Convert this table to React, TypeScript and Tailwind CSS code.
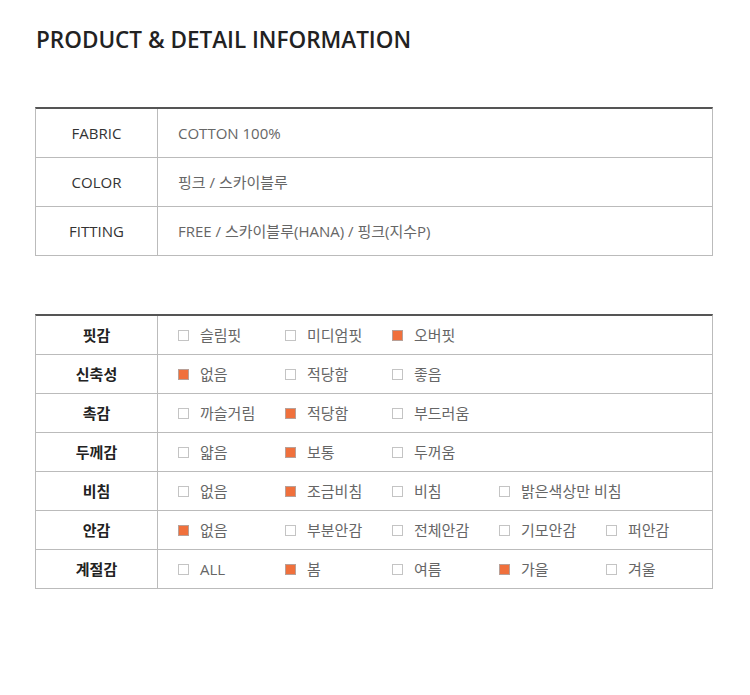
import React from "react";

const font = { fontFamily: '"Open Sans", "Noto Sans CJK KR", sans-serif' };

type Opt = [string, boolean];

const rows1: [string, string][] = [
  ["FABRIC", "COTTON 100%"],
  ["COLOR", "핑크 / 스카이블루"],
  ["FITTING", "FREE / 스카이블루(HANA) / 핑크(지수P)"],
];

const rows2: [string, Opt[]][] = [
  ["핏감", [["슬림핏", false], ["미디엄핏", false], ["오버핏", true]]],
  ["신축성", [["없음", true], ["적당함", false], ["좋음", false]]],
  ["촉감", [["까슬거림", false], ["적당함", true], ["부드러움", false]]],
  ["두께감", [["얇음", false], ["보통", true], ["두꺼움", false]]],
  ["비침", [["없음", false], ["조금비침", true], ["비침", false], ["밝은색상만 비침", false]]],
  ["안감", [["없음", true], ["부분안감", false], ["전체안감", false], ["기모안감", false], ["퍼안감", false]]],
  ["계절감", [["ALL", false], ["봄", true], ["여름", false], ["가을", true], ["겨울", false]]],
];

function Box({ on }: { on: boolean }) {
  return on ? (
    <span className="block w-[11px] h-[11px] bg-[#f0703c] border border-[#b9a097] shrink-0" />
  ) : (
    <span className="block w-[11px] h-[11px] bg-white border border-[#c4c4c4] shrink-0" />
  );
}

export default function App() {
  return (
    <div className="w-[750px] h-[695px] bg-white overflow-hidden" style={font}>
      <div className="pt-[24px] pl-[36px]">
        <h1 className="text-[22.5px] leading-[32px] font-semibold text-[#222]">
          PRODUCT &amp; DETAIL INFORMATION
        </h1>
      </div>

      <div className="ml-[35px] mt-[51px] w-[678px] border-t-2 border-t-[#555] border-x border-b border-[#bbb]">
        {rows1.map(([k, v], i) => (
          <div
            key={k}
            className={`flex ${i < rows1.length - 1 ? "border-b border-[#bbb]" : ""}`}
            style={{ height: i < rows1.length - 1 ? 49 : 48 }}
          >
            <div className="w-[122px] shrink-0 border-r border-[#bbb] flex items-center justify-center text-[15px] text-[#333]">
              {k}
            </div>
            <div className="flex-1 flex items-center pl-[20px] text-[15px] text-[#666]">{v}</div>
          </div>
        ))}
      </div>

      <div className="ml-[35px] mt-[58px] w-[678px] border-t-2 border-t-[#555] border-x border-b border-[#bbb]">
        {rows2.map(([k, opts], i) => (
          <div
            key={k}
            className={`flex ${i < rows2.length - 1 ? "border-b border-[#bbb]" : ""}`}
            style={{ height: i < rows2.length - 1 ? 39 : 38 }}
          >
            <div className="w-[122px] shrink-0 border-r border-[#bbb] flex items-center justify-center text-[15px] font-bold text-[#222]">
              {k}
            </div>
            <div className="flex-1 min-w-0 flex items-center pl-[20px]">
              {opts.map(([t, on]) => (
                <div key={t} className="w-[107px] shrink-0 flex items-center gap-[11px] text-[15px] text-[#666] whitespace-nowrap">
                  <Box on={on} />
                  <span>{t}</span>
                </div>
              ))}
            </div>
          </div>
        ))}
      </div>
    </div>
  );
}
